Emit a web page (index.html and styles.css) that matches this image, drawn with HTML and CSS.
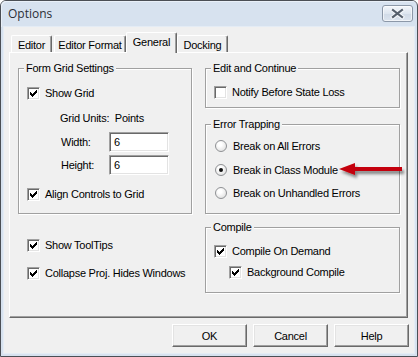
FILE: index.html
```html
<!DOCTYPE html>
<html lang="en">
<head>
  <meta charset="UTF-8" />
  <title>Options</title>
  <link rel="stylesheet" href="styles.css">
</head>
<body>
  <div class="window">
    <div class="titlebar">
      <span class="title">Options</span>
      <span class="close-btn">
        <svg width="29" height="15" viewBox="0 0 29 15">
          <path d="M10 4 L19 11 M19 4 L10 11" stroke="#f4f7fb" stroke-width="4.2" stroke-linecap="square" fill="none"/>
          <path d="M10 4 L19 11 M19 4 L10 11" stroke="#56606d" stroke-width="2.2" stroke-linecap="square" fill="none"/>
        </svg>
      </span>
    </div>

    <div class="client">
      <div class="tabs">
        <div class="tab tab-editor">Editor</div>
        <div class="tab tab-format">Editor Format</div>
        <div class="tab tab-general active">General</div>
        <div class="tab tab-docking">Docking</div>
      </div>

      <div class="panel">
        <!-- left column -->
        <div class="col">
          <div class="group group-grid">
            <div class="group-title">Form Grid Settings</div>
            <div class="row check-row row-showgrid"><span class="check checked"></span>Show Grid</div>
            <div class="row text-row row-units">Grid Units:&nbsp; Points</div>
            <div class="row field-row row-width"><span class="field-label">Width:</span><span class="textbox">6</span></div>
            <div class="row field-row row-height"><span class="field-label">Height:</span><span class="textbox">6</span></div>
            <div class="row check-row row-align"><span class="check checked"></span>Align Controls to Grid</div>
          </div>
          <div class="row check-row row-tooltips"><span class="check checked"></span>Show ToolTips</div>
          <div class="row check-row row-collapse"><span class="check checked"></span>Collapse Proj. Hides Windows</div>
        </div>

        <!-- right column -->
        <div class="col">
          <div class="group group-edit">
            <div class="group-title">Edit and Continue</div>
            <div class="row check-row row-notify"><span class="check"></span>Notify Before State Loss</div>
          </div>

          <div class="group group-errors">
            <div class="group-title">Error Trapping</div>
            <div class="row check-row row-radio1"><span class="radio"></span>Break on All Errors</div>
            <div class="row check-row row-radio2"><span class="radio selected"></span>Break in Class Module</div>
            <div class="row check-row row-radio3"><span class="radio"></span>Break on Unhandled Errors</div>
            <svg class="arrow" width="74" height="26" viewBox="0 0 74 26">
              <defs>
                <filter id="shadow" x="-20%" y="-50%" width="140%" height="200%">
                  <feDropShadow dx="2" dy="3" stdDeviation="1.6" flood-color="#000" flood-opacity="0.45"/>
                </filter>
              </defs>
              <path d="M3 11 L19 5 L19 9 L66 9 L66 13 L19 13 L19 17 Z" fill="#c4000a" filter="url(#shadow)"/>
            </svg>
          </div>

          <div class="group group-compile">
            <div class="group-title">Compile</div>
            <div class="row check-row row-ondemand"><span class="check checked"></span>Compile On Demand</div>
            <div class="row check-row row-background"><span class="check checked"></span>Background Compile</div>
          </div>
        </div>
      </div>

      <div class="buttons">
        <button type="button" class="btn">OK</button>
        <button type="button" class="btn">Cancel</button>
        <button type="button" class="btn">Help</button>
      </div>
    </div>
  </div>
</body>
</html>
```

FILE: styles.css
```css
body {
  margin: 0;
  padding: 0;
  font-family: 'Liberation Sans', Arial, sans-serif;
  font-size: 11px;
  letter-spacing: -0.25px;
  color: #000;
  background: #fff;
}

.window {
  box-sizing: border-box;
  width: 418px;
  height: 357px;
  border: 1px solid #4b4f55;
  border-radius: 6px 6px 0 0;
  background: #d7e2ef;
  display: flex;
  flex-direction: column;
}

/* title bar */
.titlebar {
  height: 26px;
  display: flex;
  justify-content: space-between;
  align-items: flex-start;
  padding-left: 7px;
  box-shadow: inset 1px 1px 0 #e9f0f8;
  border-radius: 5px 5px 0 0;
}

.title {
  font-family: 'Open Sans', 'Liberation Sans', sans-serif;
  font-size: 12px;
  letter-spacing: 0;
  line-height: 26px;
  color: #2a2f36;
}

.close-btn {
  box-sizing: border-box;
  width: 31px;
  height: 17px;
  margin: 4px 4px 0 0;
  border: 1px solid #8c98a8;
  border-radius: 3px;
  background: linear-gradient(#f3f6fa, #dde5ef 50%, #d0dae7 51%, #dce4ee);
  box-shadow: inset 0 0 0 1px rgba(255,255,255,0.6);
  display: flex;
}

/* client area */
.client {
  flex: 1;
  margin: 0 3px 3px 3px;
  background: #f0f0f0;
  box-shadow: 0 0 0 1px #e4ecf5;
}

.tabs {
  display: flex;
  align-items: flex-end;
  height: 21px;
  margin-top: 5px;
  position: relative;
  z-index: 1;
}

.tab {
  box-sizing: border-box;
  height: 17px;
  margin-bottom: 1px;
  border: 1px solid;
  border-color: #fff #696969 transparent #fff;
  border-bottom: none;
  border-radius: 2px 2px 0 0;
  box-shadow: inset -1px 0 0 #a0a0a0;
  background: #f0f0f0;
  display: flex;
  justify-content: center;
  align-items: center;
  padding-top: 1px;
  white-space: nowrap;
}

.tab-editor { width: 41px; margin-left: 7px; }
.tab-format { width: 72px; margin-left: 2px; }
.tab-general { width: 51px; }
.tab-docking { width: 51px; }

.tab.active {
  height: 21px;
  margin-bottom: 0;
  padding-top: 0;
  padding-bottom: 3px;
}

/* tab page */
.panel {
  box-sizing: border-box;
  width: 399px;
  height: 266px;
  margin: -1px 0 0 5px;
  border-top: 1px solid #fff;
  border-left: 1px solid #fff;
  border-right: 1px solid #696969;
  border-bottom: 1px solid #696969;
  box-shadow: inset -1px -1px 0 #a0a0a0;
  padding: 15px 0 0 8px;
  display: grid;
  grid-template-columns: 174px 195px;
  column-gap: 13px;
  align-items: start;
}

.group {
  box-sizing: border-box;
  border: 1px solid #a0a0a0;
  box-shadow: 1px 1px 0 #fff, inset 1px 1px 0 #fff;
  position: relative;
}

.group-title {
  width: max-content;
  margin: -7px 0 0 5px;
  padding: 0 2px;
  line-height: 13px;
  background: #f0f0f0;
}

.group-grid { height: 146px; }
.group-edit { height: 40px; }
.group-errors { height: 90px; margin-top: 16px; }
.group-compile { height: 66px; margin-top: 13px; }

/* rows */
.row {
  display: flex;
  align-items: center;
  white-space: nowrap;
}

.check-row {
  height: 16px;
  gap: 5px;
  padding-left: 8px;
}

.text-row {
  height: 16px;
  padding-left: 41px;
}

.field-row {
  height: 20px;
  padding-left: 42px;
}

.field-label {
  width: 48px;
}

.row-showgrid { margin-top: 10px; }
.row-units { margin-top: 9px; }
.row-width { margin-top: 6px; }
.row-height { margin-top: 3px; }
.row-align { margin-top: 11px; }

.row-tooltips { margin-top: 23px; padding-left: 9px; }
.row-collapse { margin-top: 12px; padding-left: 9px; }

.row-notify { margin-top: 9px; }
.row-radio1 { margin-top: 7px; padding-left: 9px; }
.row-radio2 { margin-top: 8px; padding-left: 9px; }
.row-radio3 { margin-top: 7px; padding-left: 9px; }
.row-ondemand { margin-top: 9px; }
.row-background { margin-top: 5px; padding-left: 23px; }

/* controls */
.check {
  box-sizing: border-box;
  flex: none;
  width: 13px;
  height: 13px;
  border: 1px solid;
  border-color: #a0a0a0 #fff #fff #a0a0a0;
  box-shadow: inset 1px 1px 0 #696969, inset -1px -1px 0 #e3e3e3;
  background: #fff;
}

.check.checked {
  background: #fff url("data:image/svg+xml,%3Csvg xmlns='http://www.w3.org/2000/svg' width='7' height='7'%3E%3Cpath d='M0 2H1V3H2V4H3V3H4V2H5V1H6V0H7V3H6V4H5V5H4V6H3V7H2V6H1V5H0Z' fill='%23000'/%3E%3C/svg%3E") no-repeat 2px 2px;
}

.radio {
  box-sizing: border-box;
  flex: none;
  width: 12px;
  height: 12px;
  border-radius: 50%;
  border: 1px solid #8f9194;
  background: radial-gradient(circle at 40% 35%, #fff 20%, #e4e4e4 75%, #cfcfcf);
  display: flex;
  align-items: center;
  justify-content: center;
  margin-right: 1px;
}

.radio.selected::after {
  content: '';
  width: 4px;
  height: 4px;
  border-radius: 50%;
  background: #111;
}

.textbox {
  box-sizing: border-box;
  width: 60px;
  height: 20px;
  border: 1px solid;
  border-color: #a0a0a0 #fff #fff #a0a0a0;
  box-shadow: inset 1px 1px 0 #696969, inset -1px -1px 0 #e3e3e3;
  background: #fff;
  padding: 2px 0 0 4px;
  line-height: 14px;
}

.arrow {
  position: absolute;
  left: 130px;
  top: 33px;
  overflow: visible;
}

/* bottom buttons */
.buttons {
  display: flex;
  justify-content: flex-end;
  gap: 6px;
  margin-top: 6px;
  padding-right: 5px;
}

.btn {
  box-sizing: border-box;
  width: 75px;
  height: 23px;
  font-family: inherit;
  font-size: 11px;
  letter-spacing: -0.25px;
  color: #000;
  background: #f0f0f0;
  border: 1px solid;
  border-color: #fff #696969 #696969 #fff;
  box-shadow: inset -1px -1px 0 #a0a0a0, inset 1px 1px 0 #e3e3e3;
  padding: 0;
}
```
